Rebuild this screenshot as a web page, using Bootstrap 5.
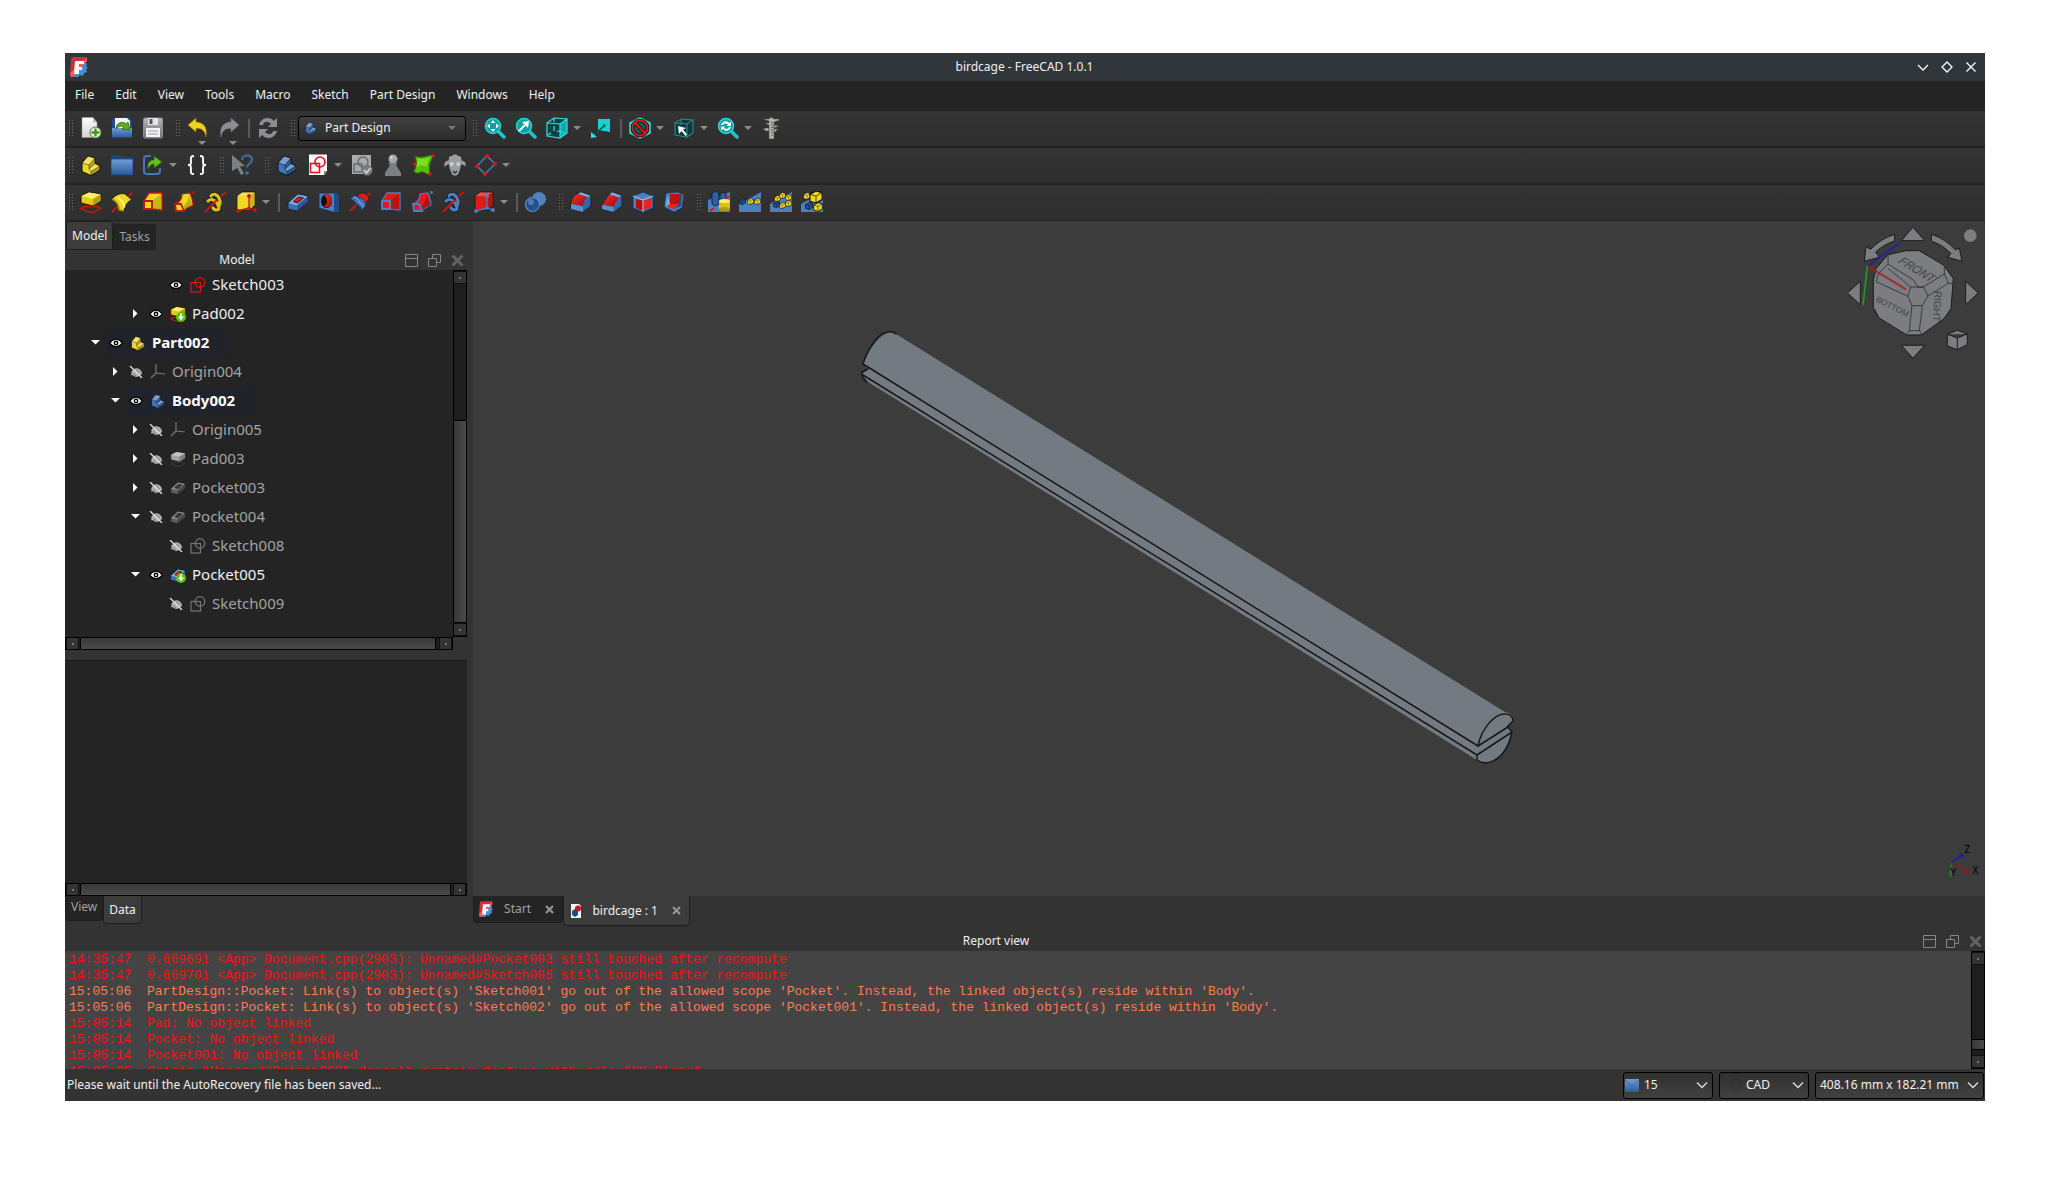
<!DOCTYPE html>
<html lang="en" data-bs-theme="dark">
<head>
<meta charset="utf-8">
<meta name="viewport" content="width=device-width, initial-scale=1">
<title>birdcage - FreeCAD 1.0.1</title>
<link href="https://cdn.jsdelivr.net/npm/bootstrap@5.3.0/dist/css/bootstrap.min.css" rel="stylesheet">
<style>
body{background:#fff;padding:53px 65px 77px;font:12px/18px "Noto Sans",sans-serif;color:#f0f0f0;overflow:hidden}
button,select{font:inherit;color:inherit}
button{background:none;border:0;padding:0}
.app{background:#333;min-width:0}
.titlebar{height:28px;background:#31363b;padding:0 6px 0 5px}
.menubar{height:30px;background:#242424}
.menubar a{color:#f0f0f0;padding:0 11px 0 10px;line-height:28px}
.tools{height:37px;background:linear-gradient(#343434,#2e2e2e);border-bottom:2px solid #222;padding:0 0 1px 3px}
.tools.last{height:36px;border-bottom-width:1px}
.tbtn{width:31px;height:28px;padding-right:1px;display:flex;align-items:center;justify-content:center;flex:none;position:relative}
.ico{width:22px;height:22px;flex:none;display:block}
.grip{width:8px;height:18px;flex:none;background:radial-gradient(circle,#707070 1px,transparent 1px) 0 0/3px 3px;background-clip:content-box;padding:0 1px}
.grip.next{margin-left:6px}
.vline{width:8px;height:19px;flex:none;background:linear-gradient(#5a5a5a,#5a5a5a) center/2px 100% no-repeat}
.drop{width:13px;height:20px;flex:none;display:flex;align-items:center}
.drop::after,.under::after{content:"";border:4px solid transparent;border-top:4px solid #8c8c8c;border-bottom:0}
.under::after{position:absolute;right:8px;bottom:-3px}
.combo{position:relative;flex:none}
.combo select{appearance:none;width:100%;height:100%;border:1px solid #000;border-radius:3px;background:linear-gradient(#303030,#414141);outline:0}
.combo svg{position:absolute;top:0;bottom:0;margin:auto 0;pointer-events:none}
.wb{width:168px;height:25px}
.wb select{padding:0 0 1px 26px;background:linear-gradient(#404040,#2c2c2c)}
.wb .ico{width:14px;height:14px;left:6px}
.wb .arr,.st .arr{right:8px;width:12px;height:8px}
.st{height:27px;width:90px}.st select{padding:0 0 0 20px}
.st.cad select{padding-left:26px}
.st.dim{width:169px}.st.dim select{padding-left:4px}
.st .arr{right:5px}
.note-ico{left:2px}.mouse-ico{left:12px}
.side{width:402px;flex:none;margin-right:6px}
.toptab{height:26px;padding:0 5px;background:#242424;color:#a0a0a0;border:1px solid #1f1f1f;border-radius:3px 3px 0 0}
.toptab.on{height:29px;background:#3c3c3c;color:#f0f0f0}
.tabrow{height:29px;padding-left:1px}
.dockhead{height:20px;padding-left:4px}
.dockhead .acts{width:59px;margin-right:3px}
.dockhead svg{width:13px;height:13px;display:block}
.report-head{height:25px;padding-top:5px}
.tree{height:380px;flex:none;display:grid;grid-template:minmax(0,1fr) 13px/minmax(0,1fr) 14px}
.rows{background:#242424;overflow:hidden;font-size:15px;line-height:29px;list-style:none;margin:0;padding:0}
.node{display:flex;align-items:center;height:29px;padding-left:calc(20px + 20px*var(--lv,0));color:#a3a3a3}
.node.vis{color:#f0f0f0}
.tog{width:20px;display:flex;justify-content:center;flex:none}
.tog svg{width:9px;height:9px;display:block}
.hit{display:flex;align-items:center;height:28px}
.hit .eye{width:14px;height:12px;margin:0 4px}
.hit .tico{width:16px;height:16px;margin:0 6px 0 3px}
.node.act .hit{background:#20242a;padding-right:20px;font-weight:700;color:#fff}
.off .tico{filter:grayscale(1) opacity(.8)}
.sbv,.sbh{background:#1e1e1e;border:1px solid #000;display:flex}
.sbv{flex-direction:column;width:14px}.sbh{height:13px}
.sbv i,.sbh i{display:flex;flex:none;width:13px;height:13px;background:#333;align-items:center;justify-content:center}
.sbv i{width:12px;border-block:1px solid #111}.sbh i{height:11px;border-inline:1px solid #111}
.sbv i::after,.sbh i::after{content:"";width:2px;height:2px;background:#777}
.sbv b{background:linear-gradient(90deg,#383838,#4a4a4a);border-block:1px solid #000}
.sbh b{background:linear-gradient(#383838,#4a4a4a);border-inline:1px solid #000;flex:1}
.sbh b{margin:0 2px 0 1px}
.tree .sbh b{margin-right:3px}
.props{background:#242424;border-top:1px solid #1c1c1c;margin-top:10px}
.bottab{background:#242424;color:#a0a0a0;border:1px solid #1e1e1e;border-top:0;border-radius:0 0 4px 4px}
.bottab.on{background:#3c3c3c;color:#f0f0f0}
.v1{height:25px;padding:0 5px 2px}.v2{height:28px;padding:0 5px}
.foot{height:30px}
.d1{height:27px;width:90px;padding:0 8px 0 5px}.d2{height:30px;width:127px;padding:0 8px 0 6px}
.bottab svg{display:block}
.tabname{margin:0 14px 0 auto}
.canvas3d{background:#3c3c3c;min-height:0}
.report{height:118px;background:#444}
.logbox{font:13px/16px "Liberation Mono",monospace;color:#f01414;overflow:hidden;height:118px;padding:1px 4px 0;margin:0;white-space:pre}
.logbox .warn{color:#fa7d55}
.statusbar{height:32px;padding:0 1px 0 2px;gap:6px}
.add{--f:#efd91f;--e:#c81414;--d:#a88f08}
.subt{--f:#e01a1a;--e:#4a80c4;--d:#8e0b0b}
.yl{color:#edd626}.bl{color:#3f74b8}
</style>
<script src="https://cdn.jsdelivr.net/npm/bootstrap@5.3.0/dist/js/bootstrap.bundle.min.js"></script>
</head>
<body class="d-flex flex-column vh-100 m-0">

<svg width="0" height="0" class="position-absolute" aria-hidden="true">
<defs>
<linearGradient id="gb" x1="0" y1="0" x2="0" y2="1"><stop stop-color="#6f9fd8"/><stop offset="1" stop-color="#2c5a9c"/></linearGradient>
<linearGradient id="gr" x1="0" y1="0" x2="1" y2="1"><stop stop-color="#ff2a2a"/><stop offset="1" stop-color="#a00a0a"/></linearGradient>
<linearGradient id="gp" x1="0" y1="0" x2="0" y2="1"><stop stop-color="#fff"/><stop offset="1" stop-color="#cfd2d0"/></linearGradient>
<linearGradient id="gg" x1="0" y1="0" x2="0" y2="1"><stop stop-color="#b4b8bc"/><stop offset="1" stop-color="#6c7074"/></linearGradient>
</defs>
<symbol id="logo" viewBox="0 0 18 20"><path d="M1 3Q1 0 4 0H17V4L3 20H1Q0 20 0 17Z" fill="#cb333b"/><path d="M3 20 15 5l2 2-1 2 2 2-2 1 1 3-3 1-1 3-3-1-2 2Z" fill="#418fde"/><path d="M0 16 17 1v3L3 20H1Z" fill="#ff585d"/><path d="M5 4h9v3H9v3h3v3H9v4H4Z" fill="#fff"/></symbol>
<symbol id="stair" viewBox="0 0 22 22"><path d="M2 9 8 2 15 4V9.500L20 12V16L11 21.500 2 17.500Z" fill="currentColor" stroke="#111" stroke-width="1" stroke-linejoin="round"/><path d="M2.500 9 8 2.500 14.500 4.300 9 11Z" fill="#fff" opacity=".3"/><path d="m9 11 5.700-6.500V10L9 15Z" fill="#000" opacity=".22"/><path d="m9 15 6-5 4.500 2.200L11 17.500Z" fill="#fff" opacity=".3"/><path d="m11 17.500 8.500-5V16L11 21Z" fill="#000" opacity=".25"/><path d="M2 9l7 2v4l2 2.500v4M9 11l6-7M9 15l6-5.500M11 17.500l9-5.500" fill="none" stroke="#000" stroke-opacity=".55" stroke-width=".8"/></symbol>
<symbol id="new" viewBox="0 0 22 22"><path d="M2 .5h11l4 5v15H2Z" fill="url(#gp)" stroke="#999" stroke-width=".5"/><path d="M13 .5v5h4Z" fill="#bbb"/><circle cx="15.500" cy="15.500" r="5.500" fill="#eef2e8" stroke="#5a6a50"/><path d="M15.500 11.500v8m-4-4h8" stroke="#3f9a10" stroke-width="2.400"/></symbol>
<symbol id="open" viewBox="0 0 22 22"><path d="M1 2h4l2-1.500h11l3 3V20H1Z" fill="#204a87"/><path d="M4 1h12l3 3v12H4Z" fill="#f4f4f4"/><path d="M1 11h20v9.500H1Z" fill="url(#gb)"/><path d="M5 12C5 5 12 4 15 7l2-2 2 8-8-1 2-2c-3-2-5-1-8 2Z" fill="#5fae1e" stroke="#2c6006" stroke-width=".8"/></symbol>
<symbol id="save" viewBox="0 0 22 22"><rect x="1.500" y="1" width="19" height="20" rx="1.500" fill="url(#gg)" stroke="#8c9094"/><rect x="6" y="1" width="10" height="7" fill="#e6e6e6"/><rect x="7.500" y="2" width="3" height="5" fill="#555"/><rect x="4" y="11" width="14" height="9" fill="#f4f4f4"/><path d="M6 14h10M6 17h10" stroke="#999"/></symbol>
<symbol id="undo" viewBox="0 0 22 22"><path d="M1 8 9 1v4c7 0 12 5 10 15-1-6-4-9-10-8.500V15Z" fill="#f0d21c" stroke="#8a7400" stroke-width=".7"/></symbol>
<symbol id="redo" viewBox="0 0 22 22"><path d="M21 8 13 1v4C6 5 1 10 3 20c1-6 4-9 10-8.500V15Z" fill="#8b8f93" stroke="#6a6e72" stroke-width=".7"/></symbol>
<symbol id="refresh" viewBox="0 0 22 22"><path d="M2 8C4 0 13-1 17 4l3-3v9h-9l3-3C11 4 7 4 6 8ZM20 14c-2 8-11 9-15 4l-3 3v-9h9l-3 3c3 3 7 3 8-1Z" fill="#8b8f93"/></symbol>
<symbol id="lens" viewBox="0 0 22 22"><path d="m14 14 6 6" stroke="#1fc4c8" stroke-width="3.500" stroke-linecap="round"/><circle cx="9" cy="9" r="7.500" fill="#159da2" stroke="#2ad4d6" stroke-width="1.500"/></symbol>
<symbol id="fit" viewBox="0 0 22 22"><use href="#lens"/><path d="M9 3l2.500 3h-5ZM9 15l2.500-3h-5ZM3 9l3-2.500v5ZM15 9l-3-2.500v5Z" fill="#fff"/></symbol>
<symbol id="fitsel" viewBox="0 0 22 22"><use href="#lens"/><path d="m4 14 6-6" stroke="#fff" stroke-width="2"/><path d="M7 5l7-1-1 7Z" fill="#fff"/></symbol>
<symbol id="iso" viewBox="0 0 22 22"><path d="M1 6 8 1l13 1v14l-7 5-13-2Z" fill="#0b4448"/><path d="m14 7 7-5v14l-7 5Z" fill="#16a4a8"/><path d="M1 6 8 1l13 1-7 5ZM1 6v13l13 2V7M21 2v14l-7 5M8 1v4m0 4v5m-3 2-3 2m9-4 8 2" fill="none" stroke="#2ee0e2" stroke-width="1.200"/></symbol>
<symbol id="viewto" viewBox="0 0 22 22"><path d="M8 2h12v13l-12-2Z" fill="#1ccfd2"/><path d="m5 17 9-8" stroke="#0a4c50" stroke-width="1.400"/><path d="M1 21v-6l6 5Z" fill="#2ee0e2"/><path d="m13 7 3 1-2 3Z" fill="#063"/></symbol>
<symbol id="nodraw" viewBox="0 0 22 22"><path d="M1 6 11 1l10 5v10l-10 5L1 16Z" fill="#18b2b6" stroke="#2ee0e2" stroke-width="1.500"/><circle cx="11" cy="11" r="7.500" fill="#0f5f62" stroke="#1a0505" stroke-width="3.600"/><path d="m6 6 10 10" stroke="#1a0505" stroke-width="3.600"/><circle cx="11" cy="11" r="7.500" fill="none" stroke="#d81c1c" stroke-width="2"/><path d="m6 6 10 10" stroke="#d81c1c" stroke-width="2.200"/></symbol>
<symbol id="boxsel" viewBox="0 0 22 22"><path d="M2 6 8 2l12 1v13l-6 4-12-2Z" fill="#12383a"/><path d="M2 6 8 2l12 1-6 4ZM2 6v12l12 2V7M20 3v13l-6 4M8 2v6" fill="none" stroke="#23898c" stroke-width="1.100"/><path d="m5 9 8 2-3 1.500 4 5-1.500 1.500-4-5L6 17Z" fill="#fff"/></symbol>
<symbol id="sync" viewBox="0 0 22 22"><use href="#lens"/><path d="M4 8c1-4 6-5 8-2l2-1v4h-4l1-1.500C9 6 7 6 6 8ZM14 10c-1 4-6 5-8 2l-2 1V9.500h4l-1 1.500c2 1.500 4 1 5-1Z" fill="#fff"/></symbol>
<symbol id="caliper" viewBox="0 0 22 22"><path d="M2 2h6l2-2 3 2h4l2 1-6 2v17H8V8L4 6h4V4ZM13 8l5 1-5 2ZM2 12l3-1h3v3H5ZM13 12h4l-4 4Z" fill="#b4b5ac" stroke="#44453e" stroke-width=".5"/><path d="M11 5v15" stroke="#444" stroke-width="1.500" stroke-dasharray="1 1.500"/></symbol>
<symbol id="folder" viewBox="0 0 22 22"><path d="M0 1h9l2 2h11v4H0Z" fill="#1c4380"/><path d="M0 5h22v16H0Z" fill="url(#gb)" stroke="#1c4380" stroke-width=".8"/></symbol>
<symbol id="link" viewBox="0 0 22 22"><path d="M9 2H5Q2 2 2 5v12q0 3 3 3h10q3 0 3-3v-3" fill="none" stroke="#4576b8" stroke-width="2"/><path d="M6 15C5 8 8 6 12 6V2l8 6-8 6v-4c-3 0-4 2-6 5Z" fill="#62c020" stroke="#2c6006" stroke-width=".7"/></symbol>
<symbol id="braces" viewBox="0 0 22 22"><path d="M8 2C4 2 5 4 5 7.500S4.500 11 2 11c2.500 0 3 .500 3 4s-1 5 3 5M14 2c4 0 3 2 3 5.500s.500 3.500 3 3.500c-2.500 0-3 .500-3 4s1 5-3 5" fill="none" stroke="#f4f4f4" stroke-width="2"/></symbol>
<symbol id="whats" viewBox="0 0 22 22"><path d="M1 1 14 12l-5 .500 4 7-3 1.500-3.500-7L1 17Z" fill="#7b8085"/><path d="M11 6c0-6 10-6 10-.500 0 4-5 4-5 8" fill="none" stroke="#3f6ea8" stroke-width="2"/><circle cx="16" cy="19" r="1.800" fill="#3f6ea8"/></symbol>
<symbol id="newsk" viewBox="0 0 22 22"><path d="M2 .5h18V17l-3 4H2Z" fill="#fbfbfb"/><rect x="3.500" y="9.500" width="9" height="9" fill="none" stroke="#e01414" stroke-width="1.600"/><circle cx="13" cy="8" r="5" fill="none" stroke="#e01414" stroke-width="1.600"/><path d="M17 17h3l-3 4Z" fill="#888"/></symbol>
<symbol id="valsk" viewBox="0 0 22 22"><path d="M1 1h19v19H1Z" fill="#a7abae"/><path d="M3 10h8v8H3Z" fill="none" stroke="#666a6e" stroke-width="1.500"/><circle cx="12" cy="8" r="5" fill="none" stroke="#666a6e" stroke-width="1.500"/><circle cx="16" cy="16" r="5.500" fill="#777b80"/><path d="m13 16 2.500 3 4-5" fill="none" stroke="#c8ccd0" stroke-width="2"/></symbol>
<symbol id="pawn" viewBox="0 0 22 22"><circle cx="11" cy="5" r="4.500" fill="#a4a6a8"/><path d="M6 9h10l-2 2 5 8v3H3v-3l5-8Z" fill="#7d8083"/><circle cx="9.500" cy="3.500" r="1.500" fill="#d4d6d8"/></symbol>
<symbol id="sheet" viewBox="0 0 22 22"><path d="M2 2c6 3 11 0 18-1-2 7-5 8-3 19-3 2-5-3-9-2-4 2-6 1-7-1 3-5 3-10 1-15Z" fill="#58bf0e" stroke="#2f7a00"/><path d="M4 4c5 2 9 0 13-1-2 4-3 6-3 10-4-2-7-2-11 0 1-3 2-6 1-9Z" fill="#7be024"/><circle cx="20" cy="1.800" r="1.800" fill="#e01414"/><circle cx="2" cy="10" r="1.800" fill="#e01414"/><circle cx="17" cy="20" r="1.800" fill="#e01414"/></symbol>
<symbol id="sheep" viewBox="0 0 22 22"><path d="M5 6c-1-4 2-4 3-4 1-2 5-2 6 0 3 0 4 2 3 4l4 2 1 4-3-1-2-1c0 4-2 8-3 10-1 2-5 2-6 0-1-2-3-6-3-10l-2 1-3 2 1-5Z" fill="#9b9ea1"/><circle cx="8" cy="10" r="1.800" fill="#e8e8e8"/><circle cx="14" cy="10" r="1.800" fill="#e8e8e8"/><path d="M8 10h.5m5 0h.5M9 17l2 2 2-2" stroke="#333" stroke-width="1.400" fill="none"/></symbol>
<symbol id="datum" viewBox="0 0 22 22"><path d="m12 2 8 8-10 10-8-8Z" fill="none" stroke="#4a80c4" stroke-width="1.400"/><g fill="#e01414"><circle cx="12.500" cy="2" r="1.900"/><circle cx="20" cy="9.500" r="1.900"/><circle cx="10" cy="20" r="1.900"/><circle cx="2" cy="12.500" r="1.900"/></g></symbol>
<symbol id="pad" viewBox="0 0 22 22"><path d="m1 17.500 4-2h12l4 2-7 3.500H8Z" fill="none" stroke="#d01414" stroke-width="1.500"/><path d="M1 5 9 1l12 2v7l-8 5L1 12Z" fill="#e3cb18" stroke="#111" stroke-width=".9"/><path d="M1.500 5 9 1.500 20.500 3.500 13 8Z" fill="#fff06a"/><path d="m13 8 7.500-4.500V10L13 14.500Z" fill="#b79d0c"/></symbol>
<symbol id="revol" viewBox="0 0 22 22"><path d="m14 9 7.500-7.500M1 21l6-6" stroke="#d01414" stroke-width="1.800"/><path d="M1 8C5 3 10 2 14 3l7 6c-4 1-7 5-8 11l-5-1C8 14 5 10 1 8Z" fill="#efd91f" stroke="#111" stroke-width=".8"/><path d="M7 6.500c4 3 6 6 6.500 10" fill="none" stroke="#fff58a" stroke-width="2"/><path d="M1 8c4 2 7 6 7 11l5 1" fill="none" stroke="#a88f08" stroke-width="1.500"/></symbol>
<symbol id="loft" viewBox="0 0 22 22"><path d="M2 10 7 2h13v17l-10-1" fill="var(--f)" stroke="var(--e)" stroke-width="1.300"/><path d="M10 10 19.500 3v15.500L10 18Z" fill="var(--d)" opacity=".5"/><rect x="2" y="10" width="8" height="8" fill="var(--f)" stroke="var(--e)" stroke-width="2"/></symbol>
<symbol id="pipe" viewBox="0 0 22 22"><path d="M2 13C8 11 9 7 9 3l8-1c2 5 3 9 3 12-3 2-7 2-9 6Z" fill="var(--f)" stroke="var(--e)" stroke-width="1.200"/><path d="M16 3c1 5 2 8 4 11-3 2-7 2-9 6v-5c3-4 5-7 5-12Z" fill="var(--d)" opacity=".6"/><path d="m2 13 6 0 3 7H3Z" fill="var(--f)" stroke="var(--e)" stroke-width="1.800"/><circle cx="20.500" cy="1.500" r="1.400" fill="var(--e)"/></symbol>
<symbol id="helix" viewBox="0 0 22 22"><path d="m14 8 7.500-7M1 21l6-6" stroke="#d01414" stroke-width="1.800"/><g fill="none" stroke-linecap="round"><path d="M7 5c2-3 6-2 8 2s1 8-1 8M4 10c3-3 7-1 9 2s3 7 0 7-4-2-4-2" stroke="#111" stroke-width="4.600"/><path d="M7 5c2-3 6-2 8 2s1 8-1 8M4 10c3-3 7-1 9 2s3 7 0 7-4-2-4-2" stroke="var(--h)" stroke-width="3.200"/></g><path d="m6 16 7-7" stroke="#d01414" stroke-width="1.800"/></symbol>
<symbol id="prim" viewBox="0 0 22 22"><path d="M2 5 7 1h13v13l-5 5H2Z" fill="var(--f)" stroke="#111" stroke-width=".8"/><path d="M2.500 5 7 1.500h12.500L14 5Z" fill="#fff" opacity=".25"/><path d="m14 5 5.500-3.500V14L14 18.500Z" fill="var(--d)" opacity=".5"/><path d="M14 5v12m0 0L3 20m11-3 6 2" stroke="var(--e)" stroke-width="1.300"/><g fill="var(--e)"><circle cx="14" cy="5" r="1.900"/><circle cx="3" cy="20" r="1.900"/><circle cx="20" cy="19" r="1.900"/><circle cx="14" cy="17" r="1.500"/></g></symbol>
<symbol id="pocket" viewBox="0 0 22 22"><path d="M1 12 11 3l10 2v6L10 20l-9-2Z" fill="#3d72b4" stroke="#111" stroke-width=".7"/><path d="M1.500 12 11 3.500l9.500 2L10 14.500Z" fill="#7eabde"/><path d="m10 14.500 10.500-9V11L10 19.500Z" fill="#2a5596"/><path d="m6.500 10.500 5-4.500 5 1-6 5Z" fill="url(#gr)" stroke="#111" stroke-width=".9"/></symbol>
<symbol id="hole" viewBox="0 0 22 22"><path d="M1 2h15l5 1v18h-6L1 17Z" fill="#4a7fc0" stroke="#12305c" stroke-width=".8"/><path d="M16 2v18l5 1V3Z" fill="#204a87"/><ellipse cx="8.500" cy="10" rx="5.500" ry="7" fill="#111"/><path d="M6 4.500c5-4 8 3 8 5.500 0 4-4 8-8 5.500 4-3 4-8 0-11Z" fill="url(#gr)"/></symbol>
<symbol id="groove" viewBox="0 0 22 22"><path d="m14 9 7-7M1 20l6-6" stroke="#d01414" stroke-width="1.800"/><path d="M9 3c5-2 9-1 11 5l-4 5C14 9 12 7 9 8Z" fill="#e01a1a" stroke="#111" stroke-width=".6"/><path d="M1 8c3-4 7-4 9-1 4 0 7 3 7 7l-4 6c-1-4-3-6-6-7-1-3-3-4-6-5Z" fill="#3f74b8" stroke="#12305c" stroke-width=".8"/><path d="M5 6c4 1 5 4 6 6 2 0 3 2 3 4" fill="none" stroke="#8fb7e6"/></symbol>
<symbol id="bool" viewBox="0 0 22 22"><circle cx="14" cy="8" r="7" fill="#5382bd"/><circle cx="7.500" cy="13.500" r="7" fill="#24508e" stroke="#5b8cc8" stroke-width="1.200"/><circle cx="6" cy="11" r="3" fill="#6c9ad2" opacity=".6"/></symbol>
<symbol id="fillet" viewBox="0 0 22 22"><path d="M1 14C1 7 5 3 11 1l10 4v10l-8 6-12-3Z" fill="#3465a4" stroke="#111" stroke-width=".7"/><path d="m11 1.300 9.500 3.500-3 1.500L8 3Z" fill="#7eabde"/><path d="M1.500 13C2 7 5 4 8 3l9.500 3c-3 2-4.500 5-4.500 9Z" fill="url(#gr)"/><path d="M1 13l12 2.500V21L1 18Z" fill="#5c8fd0"/></symbol>
<symbol id="chamfer" viewBox="0 0 22 22"><path d="M1 14 11 1l10 4v10l-8 6-12-3Z" fill="#3465a4" stroke="#111" stroke-width=".7"/><path d="m11 1.300 9.500 3.500-3 1.500L8.500 3.500Z" fill="#7eabde"/><path d="m1.500 13.500 7-10 9 3-5 9Z" fill="url(#gr)"/><path d="m1 14 11.500 2V21L1 18Z" fill="#5c8fd0"/></symbol>
<symbol id="draft" viewBox="0 0 22 22"><path d="m1 5 10-4 10 4v12l-10 4-10-4Z" fill="#4a7fc0" stroke="#12305c" stroke-width=".8"/><path d="m4 8 7 1.500v10L4 17Z" fill="#b81010"/><path d="m20 7-9 2.500v10l8-3Z" fill="#f02020"/><path d="m1 5 10 4 10-4M11 9v12" fill="none" stroke="#a7c6ee"/></symbol>
<symbol id="thick" viewBox="0 0 22 22"><path d="m3 2 12-1 6 3-2 13-8 4-10-5Z" fill="#4a7fc0" stroke="#12305c" stroke-width=".8"/><path d="m4 4 3 9-4 3Z" fill="#7fabdf"/><path d="M7 3h9v10H7Z" fill="#c01010"/><path d="m7 13 9 0-6 5-6-3Z" fill="#f02020"/><path d="m16 3 3 1-1 11-7 3 5-5Z" fill="#204a87"/></symbol>
<symbol id="mirror" viewBox="0 0 22 22"><path d="M0 9 22 1v20H0Z" fill="#4a7fc0"/><path d="M4 2l4-2 3 3v10l-4 2-3-2ZM12 3l3-2 3 2v7h-6Z" fill="#2f5f9e" stroke="#111" stroke-width=".8"/><path d="m2 20 4-3m12-9 3-3" stroke="#e01414" stroke-width="1.800"/><path d="M11 10h11v8H11Z" fill="#d9c11a"/><ellipse cx="16.500" cy="18" rx="5.500" ry="2" fill="#b59d10"/><ellipse cx="16.500" cy="10" rx="5.500" ry="2" fill="#fff06a"/></symbol>
<symbol id="cb" viewBox="0 0 8 8"><path d="m.5 2.500 3.500-2 3.500 1v4l-3.500 2-3.500-1Z" fill="currentColor" stroke="#111" stroke-width=".7"/><path d="m.5 2.500 3.500 1 3.500-2M4 3.500v4" stroke="#111" stroke-width=".4" fill="none"/></symbol>
<symbol id="linpat" viewBox="0 0 22 22"><path d="M0 13 22 1v20H0Z" fill="#4a7fc0"/><use href="#cb" x="0" y="7" width="7" height="7" color="#234f90"/><use href="#cb" x="8" y="7" width="7" height="7" color="#edd626"/><use href="#cb" x="15" y="7" width="7" height="7" color="#edd626"/></symbol>
<symbol id="polpat" viewBox="0 0 22 22"><path d="M0 13 22 1v20H0Z" fill="#4a7fc0"/><g color="#edd626"><use href="#cb" x="4" y="4" width="7" height="7"/><use href="#cb" x="9" y="1" width="7" height="7"/><use href="#cb" x="15" y="3" width="7" height="7"/><use href="#cb" x="15" y="9" width="7" height="7"/><use href="#cb" x="9" y="11" width="7" height="7"/></g><use href="#cb" x="3" y="10" width="7" height="7" color="#234f90"/></symbol>
<symbol id="multi" viewBox="0 0 22 22"><path d="M0 13 22 1v20H0Z" fill="#4a7fc0"/><g color="#edd626"><use href="#cb" x="2" y="1" width="8" height="8"/><use href="#cb" x="8" y="-1" width="14" height="14"/><use href="#cb" x="12" y="11" width="10" height="10"/></g><use href="#cb" x="4" y="11" width="8" height="8" color="#234f90"/></symbol>
<symbol id="eye" viewBox="0 0 14 12"><path d="M0 6Q7-3 14 6 7 15 0 6Z" fill="#000"/><path d="M1.500 6Q7-.5 12.500 6 7 12.500 1.500 6Z" fill="#fff"/><circle cx="7" cy="6" r="2.400" fill="#000"/><circle cx="7" cy="6" r="1" fill="#fff"/></symbol>
<symbol id="shut" viewBox="0 0 14 12"><path d="M2 6.500Q5 1 9 2.500 13 4 13 8 8 13 4 9.500Z" fill="#b4b4b4"/><path d="M5 4.500l5 5m-3-6 4 4M4 7l3 3" stroke="#555" stroke-width=".7"/><path d="M1 0l12 12" stroke="#e4e4e4" stroke-width="1.300"/><path d="M2 9l2-1" stroke="#ccc"/></symbol>
<symbol id="sk" viewBox="0 0 16 16"><rect x="1" y="5.500" width="9.500" height="9.500" fill="none" stroke="currentColor" stroke-width="1.200"/><circle cx="10" cy="5.500" r="4.800" fill="none" stroke="currentColor" stroke-width="1.200"/></symbol>
<symbol id="orig" viewBox="0 0 16 16"><path d="M6 0v9m0 0L1 14m5-5 9 1" stroke="#888c90" stroke-width="1.200" fill="none"/></symbol>
<symbol id="tip" viewBox="0 0 16 16"><circle cx="11" cy="11" r="5" fill="#5cc40c"/><path d="M10 7.500h2v3h2l-3 3.800-3-3.800h2Z" fill="#fff"/></symbol>
<symbol id="right" viewBox="0 0 9 9"><path d="M2 0 6.500 4.500 2 9Z" fill="#fff"/></symbol>
<symbol id="down" viewBox="0 0 9 9"><path d="M0 2h9L4.500 6.500Z" fill="#fff"/></symbol>
<symbol id="pin" viewBox="0 0 13 13"><path d="M.5.5h12v12H.5ZM1 4.500h11" fill="none" stroke="#858585"/></symbol>
<symbol id="float" viewBox="0 0 13 13"><path d="M4.500.5h8v8h-8Z" fill="none" stroke="#858585"/><path d="M.5 4.500h8v8h-8Z" fill="#333" stroke="#858585"/></symbol>
<symbol id="shutx" viewBox="0 0 13 13"><path d="m1.500 1.500 10 10m0-10-10 10" stroke="#626262" stroke-width="3"/></symbol>
<symbol id="tabx" viewBox="0 0 9 9"><path d="m1 1 7 7m0-7-7 7" stroke="#999" stroke-width="2"/></symbol>
<symbol id="chev" viewBox="0 0 12 8"><path d="m1 1.500 5 5 5-5" fill="none" stroke="#e0e0e0" stroke-width="1.300"/></symbol>
</svg>

<main class="app d-flex flex-column flex-grow-1 overflow-hidden">
  <header class="titlebar d-flex align-items-center flex-shrink-0">
    <div class="flex-fill w-25"><svg width="18" height="20" class="d-block"><use href="#logo"/></svg></div>
    <div>birdcage - FreeCAD 1.0.1</div>
    <div class="flex-fill w-25 d-flex justify-content-end gap-2">
      <button aria-label="Minimize"><svg width="16" height="12" class="d-block"><path d="m3 4 5 5 5-5" fill="none" stroke="#fff" stroke-width="1.300"/></svg></button>
      <button aria-label="Maximize"><svg width="16" height="12" class="d-block"><path d="m8 1 5 5-5 5-5-5Z" fill="none" stroke="#fff" stroke-width="1.300"/></svg></button>
      <button aria-label="Close"><svg width="16" height="12" class="d-block"><path d="m3.500 1.500 9 9m0-9-9 9" stroke="#fff" stroke-width="1.300"/></svg></button>
    </div>
  </header>
  <nav class="menubar d-flex flex-shrink-0">
    <a class="text-decoration-none" href="#">File</a><a class="text-decoration-none" href="#">Edit</a><a class="text-decoration-none" href="#">View</a><a class="text-decoration-none" href="#">Tools</a><a class="text-decoration-none" href="#">Macro</a><a class="text-decoration-none" href="#">Sketch</a><a class="text-decoration-none" href="#">Part Design</a><a class="text-decoration-none" href="#">Windows</a><a class="text-decoration-none" href="#">Help</a>
  </nav>

  <div class="tools d-flex align-items-center flex-shrink-0" role="toolbar" aria-label="File and view">
    <span class="grip"></span>
    <button class="tbtn" aria-label="New"><svg class="ico"><use href="#new"/></svg></button>
    <button class="tbtn" aria-label="Open"><svg class="ico"><use href="#open"/></svg></button>
    <button class="tbtn" aria-label="Save"><svg class="ico"><use href="#save"/></svg></button>
    <span class="grip next"></span>
    <button class="tbtn under" aria-label="Undo"><svg class="ico"><use href="#undo"/></svg></button>
    <button class="tbtn under" aria-label="Redo"><svg class="ico"><use href="#redo"/></svg></button>
    <span class="vline"></span>
    <button class="tbtn" aria-label="Refresh"><svg class="ico"><use href="#refresh"/></svg></button>
    <span class="grip next"></span>
    <div class="combo wb"><select aria-label="Workbench"><option>Part Design</option></select><svg class="ico bl"><use href="#stair"/></svg><svg class="arr" viewBox="0 0 12 8"><path d="M2 2h8L6 6Z" fill="#777"/></svg></div>
    <span class="grip next"></span>
    <button class="tbtn" aria-label="Fit all"><svg class="ico"><use href="#fit"/></svg></button>
    <button class="tbtn" aria-label="Fit selection"><svg class="ico"><use href="#fitsel"/></svg></button>
    <button class="tbtn" aria-label="Isometric"><svg class="ico"><use href="#iso"/></svg></button><button class="drop" aria-label="More views"></button>
    <button class="tbtn" aria-label="Align to selection"><svg class="ico"><use href="#viewto"/></svg></button>
    <span class="vline"></span>
    <button class="tbtn" aria-label="Draw style"><svg class="ico"><use href="#nodraw"/></svg></button><button class="drop" aria-label="More draw styles"></button>
    <button class="tbtn" aria-label="Selection view"><svg class="ico"><use href="#boxsel"/></svg></button><button class="drop" aria-label="More selection views"></button>
    <button class="tbtn" aria-label="Sync view"><svg class="ico"><use href="#sync"/></svg></button><button class="drop" aria-label="More sync options"></button>
    <button class="tbtn" aria-label="Measure"><svg class="ico"><use href="#caliper"/></svg></button>
  </div>

  <div class="tools d-flex align-items-center flex-shrink-0" role="toolbar" aria-label="Structure">
    <span class="grip"></span>
    <button class="tbtn" aria-label="Create part"><svg class="ico yl"><use href="#stair"/></svg></button>
    <button class="tbtn" aria-label="Create group"><svg class="ico"><use href="#folder"/></svg></button>
    <button class="tbtn" aria-label="Make link"><svg class="ico"><use href="#link"/></svg></button><button class="drop" aria-label="More links"></button>
    <button class="tbtn" aria-label="Variable set"><svg class="ico"><use href="#braces"/></svg></button>
    <span class="grip next"></span>
    <button class="tbtn" aria-label="What's this?"><svg class="ico"><use href="#whats"/></svg></button>
    <span class="grip next"></span>
    <button class="tbtn" aria-label="Create body"><svg class="ico bl"><use href="#stair"/></svg></button>
    <button class="tbtn" aria-label="Create sketch"><svg class="ico"><use href="#newsk"/></svg></button><button class="drop" aria-label="More sketch tools"></button>
    <button class="tbtn" aria-label="Validate sketch"><svg class="ico"><use href="#valsk"/></svg></button>
    <button class="tbtn" aria-label="Check geometry"><svg class="ico"><use href="#pawn"/></svg></button>
    <button class="tbtn" aria-label="Shape binder"><svg class="ico"><use href="#sheet"/></svg></button>
    <button class="tbtn" aria-label="Clone"><svg class="ico"><use href="#sheep"/></svg></button>
    <button class="tbtn" aria-label="Datum plane"><svg class="ico"><use href="#datum"/></svg></button><button class="drop" aria-label="More datums"></button>
  </div>

  <div class="tools last d-flex align-items-center flex-shrink-0" role="toolbar" aria-label="Part Design">
    <span class="grip"></span>
    <button class="tbtn" aria-label="Pad"><svg class="ico"><use href="#pad"/></svg></button>
    <button class="tbtn" aria-label="Revolution"><svg class="ico"><use href="#revol"/></svg></button>
    <button class="tbtn add" aria-label="Additive loft"><svg class="ico"><use href="#loft"/></svg></button>
    <button class="tbtn add" aria-label="Additive pipe"><svg class="ico"><use href="#pipe"/></svg></button>
    <button class="tbtn" style="--h:#d9c11a" aria-label="Additive helix"><svg class="ico"><use href="#helix"/></svg></button>
    <button class="tbtn add" aria-label="Additive box"><svg class="ico"><use href="#prim"/></svg></button><button class="drop" aria-label="More additive primitives"></button>
    <span class="vline"></span>
    <button class="tbtn" aria-label="Pocket"><svg class="ico"><use href="#pocket"/></svg></button>
    <button class="tbtn" aria-label="Hole"><svg class="ico"><use href="#hole"/></svg></button>
    <button class="tbtn" aria-label="Groove"><svg class="ico"><use href="#groove"/></svg></button>
    <button class="tbtn subt" aria-label="Subtractive loft"><svg class="ico"><use href="#loft"/></svg></button>
    <button class="tbtn subt" aria-label="Subtractive pipe"><svg class="ico"><use href="#pipe"/></svg></button>
    <button class="tbtn" style="--h:#4a80c4" aria-label="Subtractive helix"><svg class="ico"><use href="#helix"/></svg></button>
    <button class="tbtn subt" aria-label="Subtractive box"><svg class="ico"><use href="#prim"/></svg></button><button class="drop" aria-label="More subtractive primitives"></button>
    <span class="vline"></span>
    <button class="tbtn" aria-label="Boolean"><svg class="ico"><use href="#bool"/></svg></button>
    <span class="grip next"></span>
    <button class="tbtn" aria-label="Fillet"><svg class="ico"><use href="#fillet"/></svg></button>
    <button class="tbtn" aria-label="Chamfer"><svg class="ico"><use href="#chamfer"/></svg></button>
    <button class="tbtn" aria-label="Draft"><svg class="ico"><use href="#draft"/></svg></button>
    <button class="tbtn" aria-label="Thickness"><svg class="ico"><use href="#thick"/></svg></button>
    <span class="grip next"></span>
    <button class="tbtn" aria-label="Mirrored"><svg class="ico"><use href="#mirror"/></svg></button>
    <button class="tbtn" aria-label="Linear pattern"><svg class="ico"><use href="#linpat"/></svg></button>
    <button class="tbtn" aria-label="Polar pattern"><svg class="ico"><use href="#polpat"/></svg></button>
    <button class="tbtn" aria-label="Multi transform"><svg class="ico"><use href="#multi"/></svg></button>
  </div>

  <div class="d-flex flex-grow-1" style="min-height:0">
    <aside class="side d-flex flex-column">
      <div class="tabrow d-flex align-items-end"><button class="toptab on">Model</button><button class="toptab">Tasks</button></div>
      <div class="dockhead d-flex align-items-center">
        <div class="flex-grow-1 text-center">Model</div>
        <div class="acts d-flex justify-content-between"><button aria-label="Overlay"><svg><use href="#pin"/></svg></button><button aria-label="Float"><svg><use href="#float"/></svg></button><button aria-label="Close panel"><svg><use href="#shutx"/></svg></button></div>
      </div>
      <div class="tree">
        <ul class="rows">
          <li class="node vis" style="--lv:3"><span class="tog"></span><span class="hit"><svg class="eye"><use href="#eye"/></svg><svg class="tico" color="#e01414"><use href="#sk"/></svg>Sketch003</span></li>
          <li class="node vis" style="--lv:2"><span class="tog"><svg><use href="#right"/></svg></span><span class="hit"><svg class="eye"><use href="#eye"/></svg><svg class="tico"><use href="#pad"/><use href="#tip"/></svg>Pad002</span></li>
          <li class="node vis act" style="--lv:0"><span class="tog"><svg><use href="#down"/></svg></span><span class="hit"><svg class="eye"><use href="#eye"/></svg><svg class="tico yl"><use href="#stair"/></svg>Part002</span></li>
          <li class="node off" style="--lv:1"><span class="tog"><svg><use href="#right"/></svg></span><span class="hit"><svg class="eye"><use href="#shut"/></svg><svg class="tico"><use href="#orig"/></svg>Origin004</span></li>
          <li class="node vis act" style="--lv:1"><span class="tog"><svg><use href="#down"/></svg></span><span class="hit"><svg class="eye"><use href="#eye"/></svg><svg class="tico bl"><use href="#stair"/></svg>Body002</span></li>
          <li class="node off" style="--lv:2"><span class="tog"><svg><use href="#right"/></svg></span><span class="hit"><svg class="eye"><use href="#shut"/></svg><svg class="tico"><use href="#orig"/></svg>Origin005</span></li>
          <li class="node off" style="--lv:2"><span class="tog"><svg><use href="#right"/></svg></span><span class="hit"><svg class="eye"><use href="#shut"/></svg><svg class="tico"><use href="#pad"/></svg>Pad003</span></li>
          <li class="node off" style="--lv:2"><span class="tog"><svg><use href="#right"/></svg></span><span class="hit"><svg class="eye"><use href="#shut"/></svg><svg class="tico"><use href="#pocket"/></svg>Pocket003</span></li>
          <li class="node off" style="--lv:2"><span class="tog"><svg><use href="#down"/></svg></span><span class="hit"><svg class="eye"><use href="#shut"/></svg><svg class="tico"><use href="#pocket"/></svg>Pocket004</span></li>
          <li class="node off" style="--lv:3"><span class="tog"></span><span class="hit"><svg class="eye"><use href="#shut"/></svg><svg class="tico" color="#888"><use href="#sk"/></svg>Sketch008</span></li>
          <li class="node vis" style="--lv:2"><span class="tog"><svg><use href="#down"/></svg></span><span class="hit"><svg class="eye"><use href="#eye"/></svg><svg class="tico"><use href="#pocket"/><use href="#tip"/></svg>Pocket005</span></li>
          <li class="node off" style="--lv:3"><span class="tog"></span><span class="hit"><svg class="eye"><use href="#shut"/></svg><svg class="tico" color="#888"><use href="#sk"/></svg>Sketch009</span></li>
        </ul>
        <div class="sbv"><i></i><span style="flex:137"></span><b style="flex:202"></b><i></i></div>
        <div class="sbh"><i></i><b></b><i></i></div>
      </div>
      <div class="props flex-grow-1 pt-1"></div>
      <div class="sbh flex-shrink-0"><i></i><b></b><i></i></div>
      <div class="foot d-flex align-items-start flex-shrink-0"><button class="bottab v1">View</button><button class="bottab on v2">Data</button></div>
    </aside>

    <section class="d-flex flex-column flex-grow-1" style="min-width:0">
      <div class="canvas3d flex-grow-1">
        <svg class="d-block w-100 h-100" viewBox="473 221 1512 675" role="img" aria-label="3D view">
          <g stroke="#16181a" stroke-width="1.500" stroke-linejoin="round" stroke-linecap="round">
            <path d="M863 364C869 350 880 332 892 332L896 334 1505 712Q1514 714 1513 721L1507 727 1512 732C1510 744 1499 763 1484 763L1477 760 868 382 862 374 868 369Z" fill="#737a82" stroke="none"/>
            <g fill="none">
              <path d="M896 334Q893 331 888 332C877 333 867 351 863 364L1478 746M868 369 862 372Q861 378 867 382M863 375 1477 755"/>
              <path d="M1478 746C1481 730 1494 713 1506 714 1511 714 1513 718 1513 721L1507 727M1478 746 1508 727 1512 732 1477 755V760C1484 765 1495 763 1503 753Q1509 746 1512 732"/>
            </g>
          </g>
          <g transform="translate(1810 50) scale(.3333)" fill="#7c7d81" stroke="#1b1b1b" stroke-width="3" stroke-linejoin="round">
            <path d="M309 532 344 572H274ZM309 925 274 886H344ZM112 729 151 694V764ZM505 729 467 694V764Z"/>
            <path d="M254 553V573Q222 583 197 606L208 622 163 634 168 590 182 598Q212 566 254 553Z"/>
            <path d="M364 553V573Q396 583 423 610L414 622 456 634 448 594 437 600Q406 566 364 553Z"/>
            <circle cx="481" cy="557" r="20" stroke-width="1"/>
            <path d="M442 841 472 852V884L442 899 412 888V853ZM412 853 442 864 472 852M442 864V899"/>
            <path d="M289 602H328L402 646 430 686 423 776 402 806 334 855H290L206 803 190 776V690L198 656 234 614Z"/>
            <g fill="none" stroke-width="2"><path d="M234 614V642L310 690 325 712 340 711 403 672 403 650M234 642 206 670 198 695 294 739 306 767H337L354 738 415 700M234 655 302 711 294 739M302 711H340L354 738M403 672 415 700 428 700M306 767 298 842H328L337 767M298 842 288 854M328 842 336 854M206 803 194 776"/></g>
            <g fill="#303134" stroke="none" font-family="Liberation Sans, sans-serif" opacity=".8">
              <text transform="translate(262 636) rotate(31) skewX(-22)" font-size="34">FRONT</text>
              <text transform="translate(196 753) rotate(27)" font-size="25">BOTTOM</text>
              <text transform="translate(374 722) rotate(93)" font-size="30">RIGHT</text>
            </g>
            <g fill="none" stroke-width="5"><path d="M173 648 272 577" stroke="#2020a8"/><path d="M172 648 159 765" stroke="#1c9c28"/><path d="M173 648 288 718" stroke="#a81c1c"/></g>
          </g>
          <g transform="translate(1480 840) scale(.3333)">
            <path d="M1415 68 1450 45" stroke="#2020a0" stroke-width="5"/><path d="m1434 48 14-8 4 12-14 2Z" fill="#2020a0"/>
            <path d="M1415 68 1474 104" stroke="#8c1c1c" stroke-width="4"/><path d="m1450 92 10-6 8 14-16-2Z" fill="#8c1c1c"/>
            <path d="M1415 68 1411 110" stroke="#1c7c28" stroke-width="5"/><path d="m1408 94h8v16h-8Z" fill="#1c7c28"/>
            <g font-family="Noto Sans, sans-serif" font-size="30"><text x="1454" y="38">Z</text><text x="1478" y="102">X</text><text x="1412" y="107">Y</text></g>
          </g>
        </svg>
      </div>
      <div class="foot d-flex align-items-start flex-shrink-0">
        <button class="bottab d1 d-flex align-items-center"><svg width="14" height="16"><use href="#logo"/></svg><span class="tabname">Start</span><svg width="9" height="9"><use href="#tabx"/></svg></button>
        <button class="bottab on d2 d-flex align-items-center"><svg width="12" height="16" viewBox="0 0 12 16"><path d="M1 1h8l2 2v12H1Z" fill="#f4f4f4"/><circle cx="8" cy="5.500" r="3" fill="#d01414"/><path d="M2 8 5 6l3 2v4l-3 2-3-2Z" fill="#204a87"/></svg><span class="tabname">birdcage : 1</span><svg width="9" height="9"><use href="#tabx"/></svg></button>
      </div>
    </section>
  </div>

  <section class="flex-shrink-0">
    <div class="dockhead report-head d-flex align-items-center">
      <div class="flex-grow-1 text-center">Report view</div>
      <div class="acts d-flex justify-content-between"><button aria-label="Overlay"><svg><use href="#pin"/></svg></button><button aria-label="Float"><svg><use href="#float"/></svg></button><button aria-label="Close panel"><svg><use href="#shutx"/></svg></button></div>
    </div>
    <div class="report d-flex">
      <div class="logbox flex-grow-1"><div>14:35:47  0.669691 &lt;App&gt; Document.cpp(2903): Unnamed#Pocket003 still touched after recompute</div><div>14:35:47  0.669701 &lt;App&gt; Document.cpp(2903): Unnamed#Sketch005 still touched after recompute</div><div class="warn">15:05:06  PartDesign::Pocket: Link(s) to object(s) 'Sketch001' go out of the allowed scope 'Pocket'. Instead, the linked object(s) reside within 'Body'.</div><div class="warn">15:05:06  PartDesign::Pocket: Link(s) to object(s) 'Sketch002' go out of the allowed scope 'Pocket001'. Instead, the linked object(s) reside within 'Body'.</div><div>15:05:14  Pad: No object linked</div><div>15:05:14  Pocket: No object linked</div><div>15:05:14  Pocket001: No object linked</div><div>15:05:25  Origin "Unnamed#Origin002" doesn't contain feature with role "XY_Plane"</div></div>
      <div class="sbv"><i></i><span style="flex:76"></span><b style="flex:9"></b><span style="flex:5"></span><i></i></div>
    </div>
  </section>

  <footer class="statusbar d-flex align-items-center flex-shrink-0">
    <div class="me-auto">Please wait until the AutoRecovery file has been saved...</div>
    <div class="combo st"><select aria-label="Notifications"><option>15</option></select><svg width="14" height="13" class="note-ico"><path d="M0 0h14v13H0Z" fill="url(#gb)"/><path d="m0 1 7 6 7-6" fill="none" stroke="#3f6ea8"/></svg><svg class="arr"><use href="#chev"/></svg></div>
    <div class="combo st cad"><select aria-label="Navigation style"><option>CAD</option></select><svg width="10" height="14" class="mouse-ico"><rect x="1" y="1" width="8" height="12" rx="3" fill="none" stroke="#2b2f33"/><path d="M5 3v3" stroke="#2b2f33" stroke-width="2"/></svg><svg class="arr"><use href="#chev"/></svg></div>
    <div class="combo st dim"><select aria-label="View dimensions"><option>408.16 mm x 182.21 mm</option></select><svg class="arr"><use href="#chev"/></svg></div>
  </footer>
</main>
</body>
</html>
